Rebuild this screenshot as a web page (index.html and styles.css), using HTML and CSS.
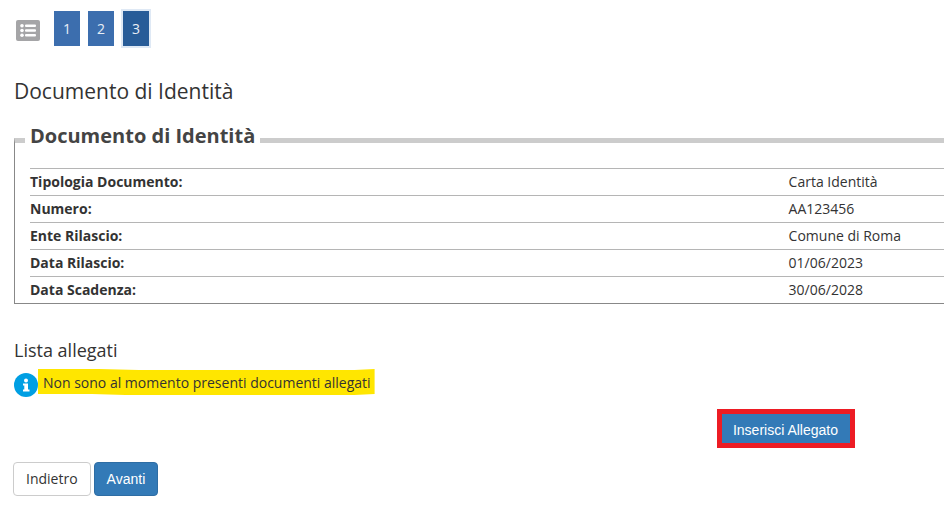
FILE: index.html
```html
<!DOCTYPE html>
<html lang="it">
<head>
  <meta charset="UTF-8" />
  <meta name="viewport" content="width=device-width, initial-scale=1.0"/>
  <title>Documento di Identità</title>
  <link rel="stylesheet" href="styles.css">
</head>
<body>

  <!-- Steps -->
  <nav class="steps">
    <svg class="list-icon" viewBox="0 0 24 21" aria-hidden="true">
      <rect width="24" height="21" rx="2" fill="#a5a5a7"/>
      <g fill="#fff">
        <circle cx="6" cy="5.7" r="1.8"/>
        <circle cx="6" cy="10.5" r="1.8"/>
        <circle cx="6" cy="15.3" r="1.8"/>
        <rect x="9" y="4.5" width="11" height="2.4" rx="1"/>
        <rect x="9" y="9.3" width="11" height="2.4" rx="1"/>
        <rect x="9" y="14.1" width="11" height="2.4" rx="1"/>
      </g>
    </svg>
    <a href="#" class="step">1</a>
    <a href="#" class="step">2</a>
    <a href="#" class="step active">3</a>
  </nav>

  <h1>Documento di Identità</h1>

  <fieldset>
    <legend>Documento di Identità</legend>
    <table>
      <tr><th scope="row">Tipologia Documento:</th><td>Carta Identità</td></tr>
      <tr><th scope="row">Numero:</th><td>AA123456</td></tr>
      <tr><th scope="row">Ente Rilascio:</th><td>Comune di Roma</td></tr>
      <tr><th scope="row">Data Rilascio:</th><td>01/06/2023</td></tr>
      <tr><th scope="row">Data Scadenza:</th><td>30/06/2028</td></tr>
    </table>
  </fieldset>

  <!-- Attachments -->
  <h2>Lista allegati</h2>
  <div class="info">
    <svg class="info-icon" viewBox="0 0 24 24" aria-hidden="true">
      <circle cx="12" cy="12" r="12" fill="#009fe3"/>
      <circle cx="12" cy="7.6" r="2" fill="#fff"/>
      <path d="M9 10.5h5v6h1.5V18.5H9V16.5h1.3v-4H9z" fill="#fff"/>
    </svg>
    <mark>Non sono al momento presenti documenti allegati</mark>
  </div>

  <div class="upload">
    <button type="button" class="btn-upload">Inserisci Allegato</button>
  </div>

  <div class="actions">
    <button type="button" class="btn">Indietro</button>
    <button type="button" class="btn btn-primary">Avanti</button>
  </div>

</body>
</html>
```

FILE: styles.css
```css
body {
  margin: 0;
  padding: 11px 0 0 14px;
  font-family: "Open Sans", sans-serif;
  font-size: 14px;
  line-height: 20px;
  color: #333;
  background: #fff;
}

.steps {
  display: flex;
  align-items: center;
  gap: 8px;
}

.list-icon {
  width: 24px;
  height: 21px;
  margin: 4px 6px 0 2px;
}

.step {
  width: 26px;
  line-height: 35px;
  text-align: center;
  text-decoration: none;
  color: #e8eef6;
  background: #3c6eae;
}

.step.active {
  margin-left: 1px;
  background: #285c98;
  box-shadow: 0 0 0 2px #dfe9f5;
}

h1 {
  margin: 30px 0 0;
  font-size: 21px;
  line-height: 30px;
  font-weight: 400;
}

fieldset {
  min-width: 0;
  margin: 16px 0 0;
  padding: 10px 0 0 15px;
  border: solid #888;
  border-width: 5px 0 1px 1px;
  border-top-color: #ccc;
}

legend {
  margin-left: -5px;
  padding: 0 5px 8px;
  font-size: 20px;
  line-height: 28px;
  font-weight: 700;
  color: #444;
}

table {
  width: 100%;
  border-collapse: collapse;
}

th, td {
  padding: 3px 0;
  border-top: 1px solid #b5b5b5;
  text-align: left;
}

th {
  width: 83%;
}

h2 {
  margin: 35px 0 0;
  font-size: 18px;
  line-height: 22px;
  font-weight: 400;
}

.info {
  display: flex;
  align-items: flex-end;
  margin-top: 8px;
}

.info-icon {
  width: 24px;
  height: 24px;
}

/* uneven edges, like a highlighter pen */
mark {
  margin-bottom: 2px;
  padding: 4px 4px 2px 5px;
  color: #333;
  background: #ffe600;
  clip-path: polygon(0 0, 18% 0, 30% 1px, 94% 1px, 100% 0, 100% 25px, 94% 26px, 26% 26px, 16% 25px, 0 25px);
}

.upload {
  display: flex;
  justify-content: flex-end;
  margin: 12px 89px 0 0;
}

button {
  font-family: "Liberation Sans", Arial, sans-serif;
  font-size: 14px;
  line-height: 20px;
  cursor: pointer;
}

.btn-upload {
  padding: 6px 12px 3px 11px;
  border: 5px solid #ed1c24;
  color: #fff;
  background: #337ab7;
}

.actions {
  display: flex;
  gap: 3px;
  margin: 14px 0 0 -1px;
}

.btn {
  padding: 6px 12px;
  border: 1px solid #ccc;
  border-radius: 4px;
  font-family: "Open Sans", sans-serif;
  color: #333;
  background: #fff;
}

.btn-primary {
  border-color: #2e6da4;
  font-family: "Liberation Sans", Arial, sans-serif;
  color: #fff;
  background: #337ab7;
}
```
